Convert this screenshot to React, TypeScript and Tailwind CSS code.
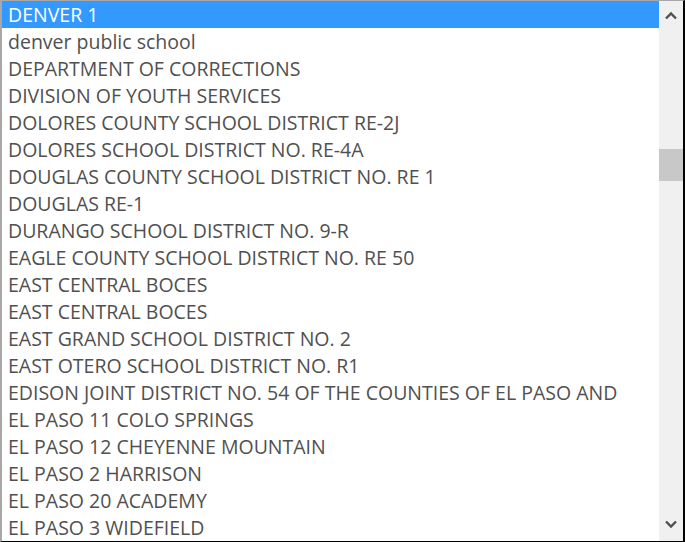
import React from "react";

const items = [
  "DENVER 1",
  "denver public school",
  "DEPARTMENT OF CORRECTIONS",
  "DIVISION OF YOUTH SERVICES",
  "DOLORES COUNTY SCHOOL DISTRICT RE-2J",
  "DOLORES SCHOOL DISTRICT NO. RE-4A",
  "DOUGLAS COUNTY SCHOOL DISTRICT NO. RE 1",
  "DOUGLAS RE-1",
  "DURANGO SCHOOL DISTRICT NO. 9-R",
  "EAGLE COUNTY SCHOOL DISTRICT NO. RE 50",
  "EAST CENTRAL BOCES",
  "EAST CENTRAL BOCES",
  "EAST GRAND SCHOOL DISTRICT NO. 2",
  "EAST OTERO SCHOOL DISTRICT NO. R1",
  "EDISON JOINT DISTRICT NO. 54 OF THE COUNTIES OF EL PASO AND",
  "EL PASO 11 COLO SPRINGS",
  "EL PASO 12 CHEYENNE MOUNTAIN",
  "EL PASO 2 HARRISON",
  "EL PASO 20 ACADEMY",
  "EL PASO 3 WIDEFIELD",
];

export default function App() {
  return (
    <div className="w-[685px] h-[542px] bg-white flex border-t border-t-[#a8a8a8] border-l-2 border-l-[#a8a8a8] border-r-2 border-r-black border-b border-b-black overflow-hidden">
      <div
        className="flex-1 flex flex-col overflow-hidden"
        style={{ fontFamily: '"Open Sans", sans-serif' }}
      >
        {items.map((t, i) => (
          <div
            key={i}
            className={
              "h-[27px] shrink-0 flex items-center pl-[6px] text-[19.5px] leading-none whitespace-nowrap " +
              (i === 0 ? "bg-[#3399ff] text-white" : "text-[#505050]")
            }
          >
            {t}
          </div>
        ))}
      </div>
      <div className="w-[24px] bg-[#f0f0f0] flex flex-col items-center">
        <div className="h-[28px] w-full flex items-center justify-center">
          <svg width="12" height="9" viewBox="0 0 12 9">
            <path d="M1 7.5 L6 2.5 L11 7.5" fill="none" stroke="#505050" strokeWidth="2.4" />
          </svg>
        </div>
        <div className="h-[120px]" />
        <div className="w-full h-[32px] bg-[#c8c8c8]" />
        <div className="flex-1" />
        <div className="h-[24px] w-full flex items-start justify-center pt-[3px]">
          <svg width="12" height="9" viewBox="0 0 12 9">
            <path d="M1 1.5 L6 6.5 L11 1.5" fill="none" stroke="#505050" strokeWidth="2.4" />
          </svg>
        </div>
      </div>
    </div>
  );
}
